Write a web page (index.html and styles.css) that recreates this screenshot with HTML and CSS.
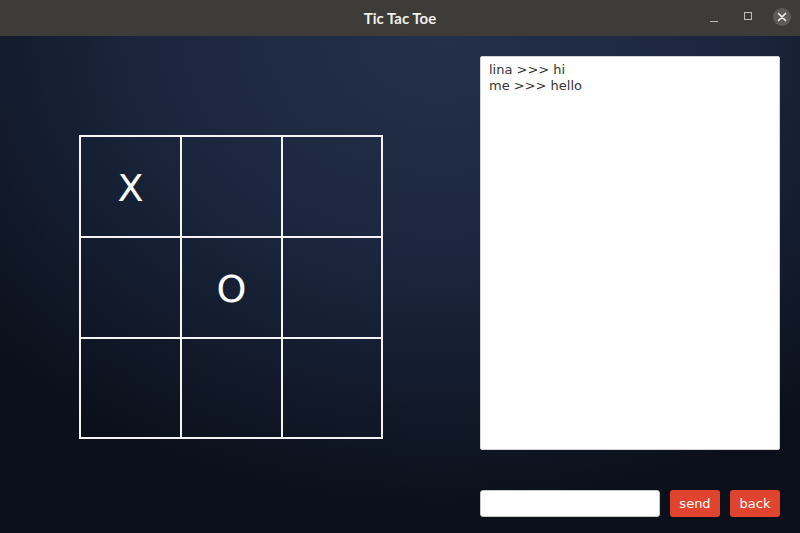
FILE: index.html
```html
<!DOCTYPE html>
<html>
<head>
<meta charset="utf-8">
<link rel="stylesheet" href="styles.css">
</head>
<body>
<div class="window">
  <div class="titlebar">
    <div class="title">Tic Tac Toe</div>
    <div class="controls">
      <svg class="ctl" width="20" height="20" viewBox="0 0 20 20"><line x1="6" y1="14.5" x2="14" y2="14.5" stroke="#bdbcb8" stroke-width="1"/></svg>
      <svg class="ctl" width="20" height="20" viewBox="0 0 20 20"><rect x="6.5" y="5.5" width="7" height="7" fill="none" stroke="#bdbcb8" stroke-width="1"/></svg>
      <svg class="ctl close" width="20" height="20" viewBox="0 0 20 20"><circle cx="10" cy="10" r="9" fill="#5c5b57"/><path d="M6.5 6.5 L13.5 13.5 M13.5 6.5 L6.5 13.5" stroke="#f2f2f2" stroke-width="1.6" stroke-linecap="round"/></svg>
    </div>
  </div>
  <div class="main">
    <div class="board-area">
      <div class="board">
        <div class="cell">X</div><div class="cell"></div><div class="cell"></div>
        <div class="cell"></div><div class="cell">O</div><div class="cell"></div>
        <div class="cell"></div><div class="cell"></div><div class="cell"></div>
      </div>
    </div>
    <div class="side">
      <div class="chat">
        <div>lina &gt;&gt;&gt; hi</div>
        <div>me &gt;&gt;&gt; hello</div>
      </div>
      <div class="inputrow">
        <input class="msg" type="text">
        <button class="btn">send</button>
        <button class="btn">back</button>
      </div>
    </div>
  </div>
</div>
</body>
</html>
```

FILE: styles.css
```css
html, body {
  margin: 0;
  padding: 0;
}
body {
  width: 800px;
  height: 533px;
  overflow: hidden;
  font-family: "DejaVu Sans", sans-serif;
}
.window {
  display: flex;
  flex-direction: column;
  height: 533px;
}
.titlebar {
  height: 36px;
  background: #3d3c38;
  position: relative;
  display: flex;
  align-items: center;
  justify-content: center;
}
.title {
  color: #f0efec;
  font-family: "Lato", sans-serif;
  font-weight: 700;
  font-size: 15px;
  margin-top: -1px;
}
.controls {
  position: absolute;
  right: 8px;
  top: 7px;
  display: flex;
  gap: 14px;
}
.ctl {
  display: block;
}
.main {
  flex: 1;
  display: flex;
  background: radial-gradient(ellipse 75% 95% at 55% 0%, #243049 0%, #1c273f 45%, #141d30 70%, #0b101a 100%);
}
.board-area {
  width: 480px;
  padding: 99px 0 0 79px;
  box-sizing: border-box;
}
.board {
  display: grid;
  grid-template-columns: 101px 101px 100px;
  grid-template-rows: 101px 101px 100px;
  width: fit-content;
  border-left: 2px solid #f4f4f4;
  border-top: 2px solid #f4f4f4;
}
.cell {
  border-right: 2px solid #f4f4f4;
  border-bottom: 2px solid #f4f4f4;
  display: flex;
  align-items: center;
  justify-content: center;
  color: #fff;
  font-family: "DejaVu Sans", sans-serif;
  font-size: 38px;
  padding-top: 2px;
  box-sizing: border-box;
}
.side {
  width: 300px;
  padding: 20px 0 16px 0;
  display: flex;
  flex-direction: column;
  box-sizing: border-box;
}
.chat {
  height: 394px;
  background: #fff;
  border: 1px solid #d4d4d4;
  border-radius: 2px;
  box-sizing: border-box;
  padding: 5px 8px;
  font-size: 13px;
  line-height: 16px;
  color: #333;
}
.inputrow {
  margin-top: auto;
  display: flex;
  gap: 10px;
  height: 27px;
}
.msg {
  width: 180px;
  height: 27px;
  box-sizing: border-box;
  border: 1px solid #c8c8c8;
  border-radius: 3px;
  background: #fff;
  margin: 0;
  padding: 0 6px;
}
.btn {
  width: 50px;
  height: 27px;
  background: #e0442f;
  color: #fff;
  border: none;
  border-radius: 3px;
  font-family: "DejaVu Sans", sans-serif;
  font-size: 13px;
  padding: 0;
  margin: 0;
}
```
